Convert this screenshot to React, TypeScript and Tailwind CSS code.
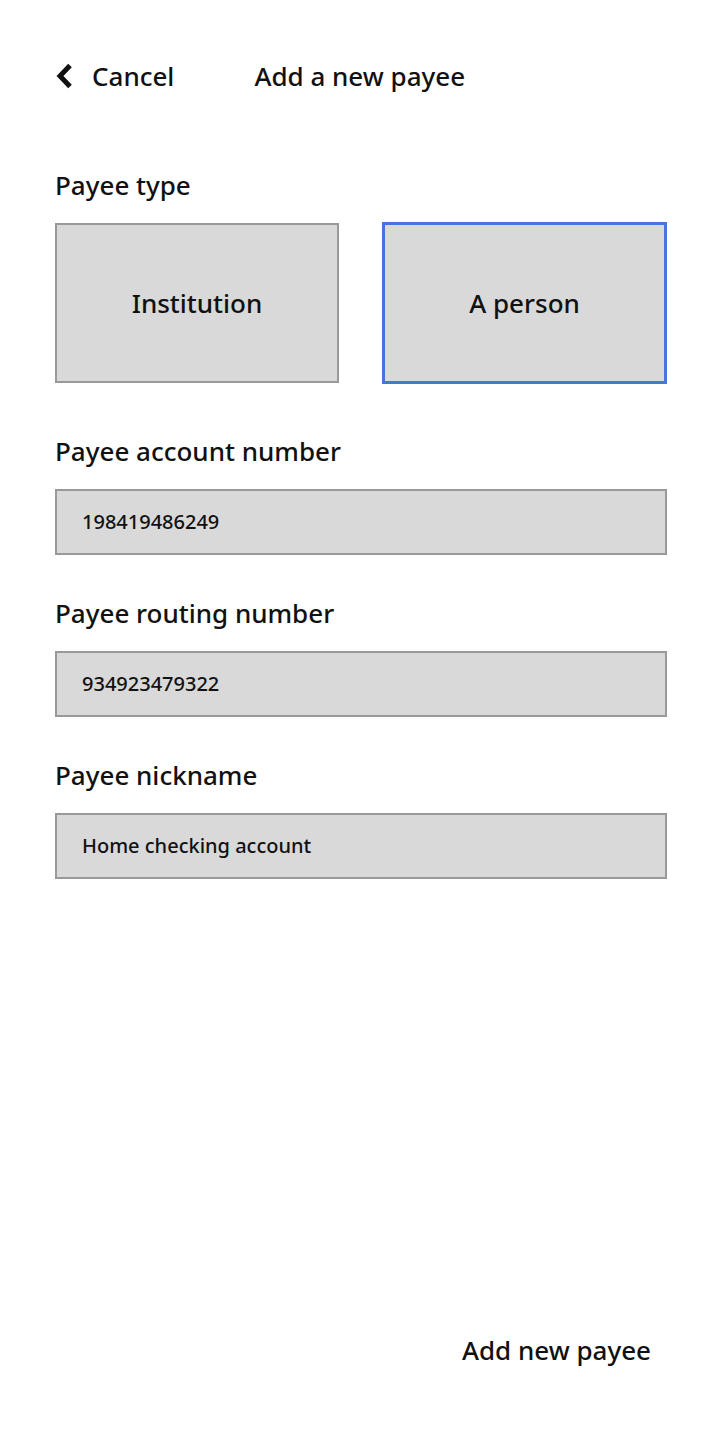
import React from "react";

const font = { fontFamily: "'Noto Sans', Roboto, sans-serif" };

function Field({ label, value }: { label: string; value: string }) {
  return (
    <div className="flex flex-col">
      <div className="text-[26px] leading-[32px] font-medium text-[#111]">{label}</div>
      <div className="mt-[22px] h-[66px] bg-[#d9d9d9] border-2 border-[#999999] flex items-center pl-[25px] text-[20px] font-medium text-[#111]">
        {value}
      </div>
    </div>
  );
}

export default function App() {
  return (
    <div className="w-[720px] h-[1440px] bg-white flex flex-col pl-[55px] pr-[53px]" style={font}>
      <div className="flex items-center pt-[56px] h-[96px] text-[26px] font-medium text-[#111]">
        <svg width="20" height="26" viewBox="0 0 20 26" className="mr-[17px]">
          <path d="M15 2.5 L5 13 L15 23.5" fill="none" stroke="#111" strokeWidth="5" strokeLinejoin="miter" />
        </svg>
        <span>Cancel</span>
        <span className="ml-[80px]">Add a new payee</span>
      </div>
      <div className="mt-[73px] text-[26px] leading-[32px] font-medium text-[#111]">Payee type</div>
      <div className="mt-[22px] flex gap-[43px]">
        <div className="w-[284px] h-[160px] bg-[#d9d9d9] border-2 border-[#999999] flex items-center justify-center text-[26px] font-medium text-[#111]">
          Institution
        </div>
        <div className="w-[285px] h-[162px] -mt-[1px] bg-[#d9d9d9] border-[3px] border-[#4677d6] flex items-center justify-center text-[26px] font-medium text-[#111]">
          A person
        </div>
      </div>
      <div className="mt-[51px] flex flex-col gap-[42px]">
        <Field label="Payee account number" value="198419486249" />
        <Field label="Payee routing number" value="934923479322" />
        <Field label="Payee nickname" value="Home checking account" />
      </div>
      <div className="flex-1" />
      <div className="flex justify-end pr-[16px] pb-[70px] text-[26px] font-medium text-[#111]">Add new payee</div>
    </div>
  );
}
